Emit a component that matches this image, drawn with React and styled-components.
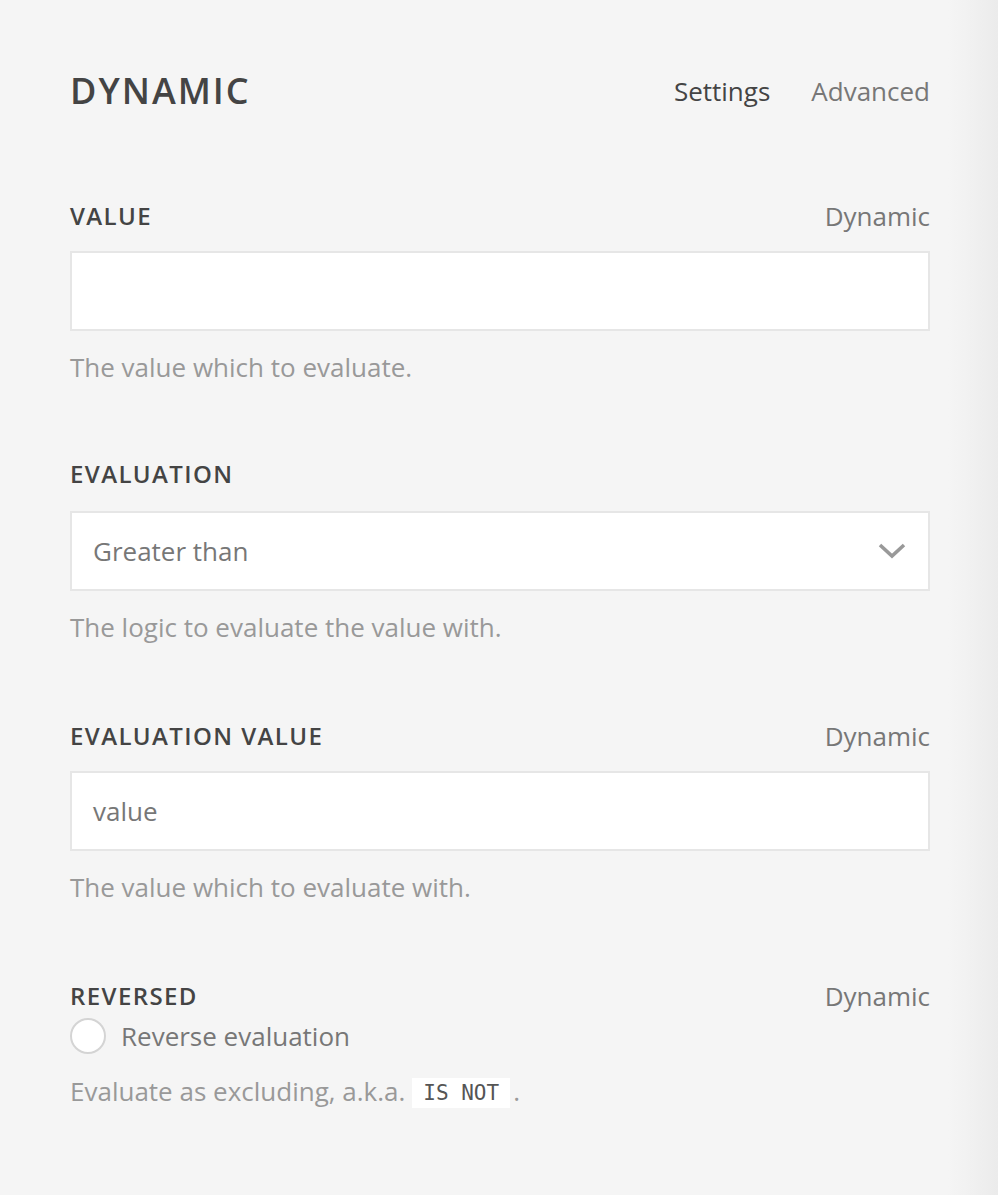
import React from "react";
import styled, { createGlobalStyle } from "styled-components";

const Global = createGlobalStyle`
  html, body { margin: 0; padding: 0; }
  body {
    font-family: "Open Sans", "Noto Sans", sans-serif;
    background: #f5f5f5;
  }
  * { box-sizing: border-box; }
`;

const Page = styled.div`
  min-height: 100vh;
  padding: 69px 68px 60px 70px;
  background: linear-gradient(
    to right,
    #f5f5f5 0px,
    #f5f5f5 948px,
    #f0f0f0 975px,
    #ebebeb 998px
  );
`;

const Header = styled.header`
  display: flex;
  align-items: center;
  justify-content: space-between;
  height: 44px;
  margin-bottom: 88px;
`;

const Title = styled.h1`
  margin: 0;
  font-family: "Open Sans", sans-serif;
  font-weight: 600;
  font-size: 36px;
  line-height: 44px;
  letter-spacing: 2px;
  color: #444;
`;

const Tabs = styled.nav`
  display: flex;
  gap: 41px;
`;

const Tab = styled.span`
  font-size: 26px;
  line-height: 36px;
  color: ${(p) => (p.$active ? "#444" : "#777")};
`;

const Field = styled.section`
  display: flex;
  flex-direction: column;
  margin-bottom: ${(p) => p.$mb ?? 74}px;
`;

const LabelRow = styled.div`
  display: flex;
  align-items: center;
  justify-content: space-between;
  height: 30px;
  margin-bottom: ${(p) => p.$gap ?? 20}px;
`;

const Label = styled.label`
  font-weight: 600;
  font-size: 24px;
  line-height: 30px;
  letter-spacing: 1.4px;
  color: #444;
`;

const Dyn = styled.span`
  font-size: 26px;
  line-height: 30px;
  color: #777;
`;

const Input = styled.div`
  height: 80px;
  background: #fff;
  border: 2px solid #e6e6e6;
  display: flex;
  align-items: center;
  justify-content: space-between;
  padding: 0 22px 0 21px;
  font-size: 26px;
  color: #777;
`;

const Help = styled.p`
  margin: ${(p) => p.$mt ?? 18}px 0 0;
  font-size: 26px;
  line-height: 36px;
  color: #999;
`;

const Code = styled.code`
  font-family: "DejaVu Sans Mono", "Liberation Mono", monospace;
  font-size: 21px;
  line-height: 30px;
  display: inline-block;
  background: #fff;
  color: #555;
  padding: 0 11px;
  margin: 0 3px 0 7px;
  vertical-align: 1px;
`;

const RadioRow = styled.div`
  display: flex;
  align-items: center;
  gap: 15px;
  height: 36px;
`;

const Radio = styled.span`
  width: 36px;
  height: 36px;
  border-radius: 50%;
  background: #fff;
  border: 2px solid #d4d4d4;
`;

const RadioText = styled.span`
  font-size: 26px;
  line-height: 36px;
  color: #777;
`;

const Chevron = () => (
  <svg width="28" height="16" viewBox="0 0 28 16" fill="none">
    <path d="M2 2 L14 13 L26 2" stroke="#999" strokeWidth="3.6" />
  </svg>
);

export default function App() {
  return (
    <Page>
      <Global />
      <Header>
        <Title>DYNAMIC</Title>
        <Tabs>
          <Tab $active>Settings</Tab>
          <Tab>Advanced</Tab>
        </Tabs>
      </Header>

      <Field>
        <LabelRow>
          <Label>VALUE</Label>
          <Dyn>Dynamic</Dyn>
        </LabelRow>
        <Input />
        <Help>The value which to evaluate.</Help>
      </Field>

      <Field $mb={76}>
        <LabelRow $gap={22}>
          <Label>EVALUATION</Label>
        </LabelRow>
        <Input>
          <span>Greater than</span>
          <Chevron />
        </Input>
        <Help>The logic to evaluate the value with.</Help>
      </Field>

      <Field $mb={76}>
        <LabelRow>
          <Label>EVALUATION VALUE</Label>
          <Dyn>Dynamic</Dyn>
        </LabelRow>
        <Input>value</Input>
        <Help>The value which to evaluate with.</Help>
      </Field>

      <Field $mb={0}>
        <LabelRow $gap={7}>
          <Label>REVERSED</Label>
          <Dyn>Dynamic</Dyn>
        </LabelRow>
        <RadioRow>
          <Radio />
          <RadioText>Reverse evaluation</RadioText>
        </RadioRow>
        <Help $mt={19}>
          Evaluate as excluding, a.k.a.<Code>IS NOT</Code>.
        </Help>
      </Field>
    </Page>
  );
}
